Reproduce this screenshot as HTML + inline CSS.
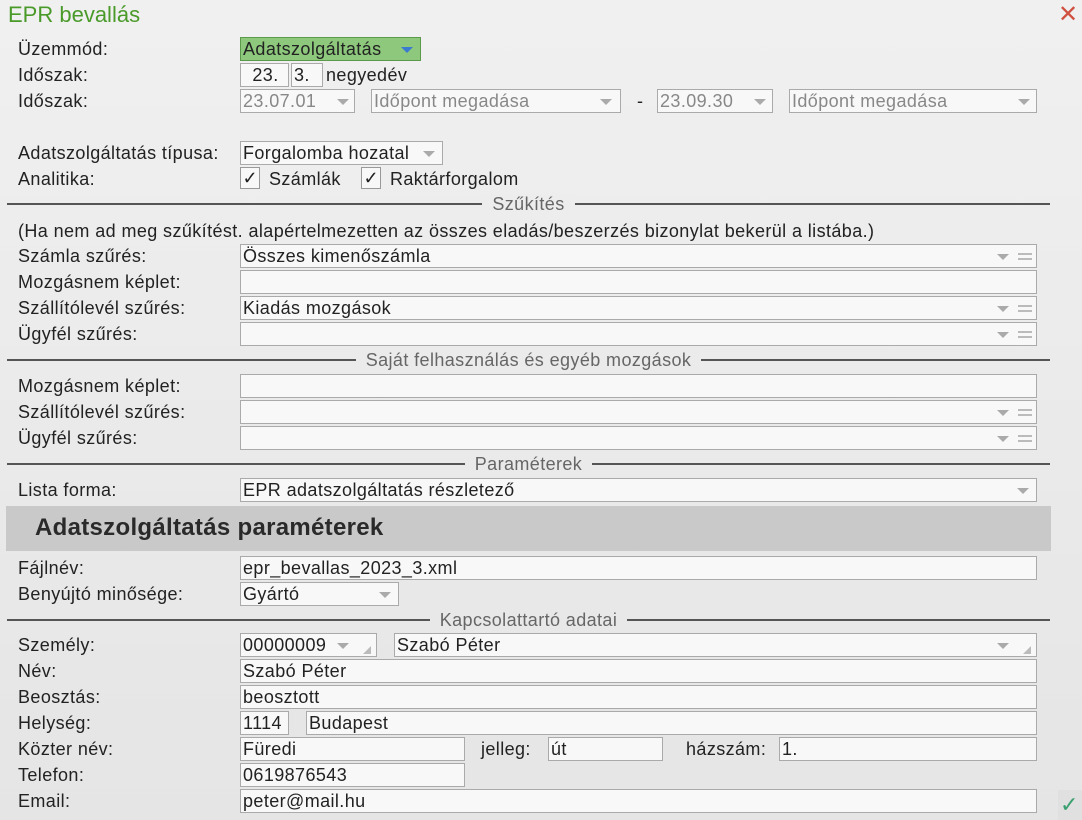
<!DOCTYPE html>
<html><head><meta charset="utf-8"><style>
*{margin:0;padding:0;box-sizing:border-box}
body{width:1082px;height:820px;background:linear-gradient(#f0f0f0,#e5e5e5);font-family:"Liberation Sans",sans-serif;font-size:18px;letter-spacing:0.4px;color:#222;position:relative;overflow:hidden}
.a{position:absolute;white-space:nowrap}
.l{position:absolute;left:18px;line-height:24px;white-space:nowrap}
.f{position:absolute;height:24px;background:#f8f8f8;border:1px solid #aaa;line-height:22px;padding-left:2px;white-space:nowrap;overflow:hidden}
.g{color:#888}
.dd{position:absolute;top:9px;width:0;height:0;border-left:6px solid transparent;border-right:6px solid transparent;border-top:6px solid #aaa}
.eq{position:absolute;top:8px;right:4px;width:14px;height:7px;border-top:2px solid #bbb;border-bottom:2px solid #bbb}
.hr{position:absolute;left:7px;width:1043px;height:2px;background:#555}
.ht{position:absolute;left:0;width:1057px;text-align:center;line-height:20px;color:#666}
.ht span{padding:0 10px}
.cb{position:absolute;width:20px;height:22px;border:1px solid #999;background:#f8f8f8;font-size:18px;line-height:20px;text-align:center;letter-spacing:0}
</style></head><body>
<div class="a" style="left:8px;top:2px;font-size:22px;color:#4a9a2a;letter-spacing:0">EPR bevallás</div>
<div class="a" style="left:1058px;top:0px;font-size:24px;color:#d05040">✕</div>

<div class="l" style="top:37px">Üzemmód:</div>
<div class="f" style="left:240px;top:37px;width:181px;background:#8dc87c;border-color:#5a9a4a">Adatszolgáltatás<div class="dd" style="left:160px;border-top-color:#3a7ad0"></div></div>
<div class="l" style="top:63px">Időszak:</div>
<div class="f" style="left:240px;top:63px;width:49px;text-align:center">23.</div>
<div class="f" style="left:291px;top:63px;width:32px">3.</div>
<div class="a" style="left:326px;top:63px;line-height:24px">negyedév</div>
<div class="l" style="top:89px">Időszak:</div>
<div class="f g" style="left:240px;top:89px;width:115px">23.07.01<div class="dd" style="left:96px"></div></div>
<div class="f g" style="left:371px;top:89px;width:250px">Időpont megadása<div class="dd" style="left:228px"></div></div>
<div class="a" style="left:637px;top:89px;line-height:24px">-</div>
<div class="f g" style="left:657px;top:89px;width:116px">23.09.30<div class="dd" style="left:96px"></div></div>
<div class="f g" style="left:789px;top:89px;width:248px">Időpont megadása<div class="dd" style="left:228px"></div></div>

<div class="l" style="top:141px">Adatszolgáltatás típusa:</div>
<div class="f" style="left:240px;top:141px;width:203px">Forgalomba hozatal<div class="dd" style="left:182px"></div></div>
<div class="l" style="top:167px">Analitika:</div>
<div class="cb" style="left:240px;top:167px">✓</div><div class="a" style="left:269px;top:167px;line-height:24px">Számlák</div>
<div class="cb" style="left:361px;top:167px">✓</div><div class="a" style="left:390px;top:167px;line-height:24px">Raktárforgalom</div>

<div class="hr" style="top:203px"></div><div class="ht" style="top:194px"><span style="background:#ededed">Szűkítés</span></div>
<div class="l" style="top:219px">(Ha nem ad meg szűkítést. alapértelmezetten az összes eladás/beszerzés bizonylat bekerül a listába.)</div>
<div class="l" style="top:244px">Számla szűrés:</div>
<div class="f" style="left:240px;top:244px;width:797px">Összes kimenőszámla<div class="dd" style="left:756px"></div><div class="eq"></div></div>
<div class="l" style="top:270px">Mozgásnem képlet:</div>
<div class="f" style="left:240px;top:270px;width:797px"></div>
<div class="l" style="top:296px">Szállítólevél szűrés:</div>
<div class="f" style="left:240px;top:296px;width:797px">Kiadás mozgások<div class="dd" style="left:756px"></div><div class="eq"></div></div>
<div class="l" style="top:322px">Ügyfél szűrés:</div>
<div class="f" style="left:240px;top:322px;width:797px"><div class="dd" style="left:756px"></div><div class="eq"></div></div>

<div class="hr" style="top:359px"></div><div class="ht" style="top:350px"><span style="background:#ebebeb">Saját felhasználás és egyéb mozgások</span></div>
<div class="l" style="top:374px">Mozgásnem képlet:</div>
<div class="f" style="left:240px;top:374px;width:797px"></div>
<div class="l" style="top:400px">Szállítólevél szűrés:</div>
<div class="f" style="left:240px;top:400px;width:797px"><div class="dd" style="left:756px"></div><div class="eq"></div></div>
<div class="l" style="top:426px">Ügyfél szűrés:</div>
<div class="f" style="left:240px;top:426px;width:797px"><div class="dd" style="left:756px"></div><div class="eq"></div></div>

<div class="hr" style="top:463px"></div><div class="ht" style="top:454px"><span style="background:#eaeaea">Paraméterek</span></div>
<div class="l" style="top:478px">Lista forma:</div>
<div class="f" style="left:240px;top:478px;width:797px">EPR adatszolgáltatás részletező<div class="dd" style="left:776px"></div></div>

<div class="a" style="left:6px;top:506px;width:1045px;height:45px;background:#c9c9c9"></div>
<div class="a" style="left:35px;top:514px;font-size:24px;font-weight:bold;color:#2a2a2a;letter-spacing:0.3px">Adatszolgáltatás paraméterek</div>

<div class="l" style="top:556px">Fájlnév:</div>
<div class="f" style="left:240px;top:556px;width:797px">epr_bevallas_2023_3.xml</div>
<div class="l" style="top:582px">Benyújtó minősége:</div>
<div class="f" style="left:240px;top:582px;width:159px">Gyártó<div class="dd" style="left:138px"></div></div>

<div class="hr" style="top:619px"></div><div class="ht" style="top:610px"><span style="background:#e8e8e8">Kapcsolattartó adatai</span></div>
<div class="l" style="top:633px">Személy:</div>
<div class="f" style="left:240px;top:633px;width:137px">00000009<div class="dd" style="left:96px"></div><div class="a" style="left:122px;top:12px;width:0;height:0;border-left:8px solid transparent;border-bottom:8px solid #bbb"></div></div>
<div class="f" style="left:394px;top:633px;width:643px">Szabó Péter<div class="dd" style="left:602px"></div><div class="a" style="left:628px;top:12px;width:0;height:0;border-left:8px solid transparent;border-bottom:8px solid #bbb"></div></div>
<div class="l" style="top:659px">Név:</div>
<div class="f" style="left:240px;top:659px;width:797px">Szabó Péter</div>
<div class="l" style="top:685px">Beosztás:</div>
<div class="f" style="left:240px;top:685px;width:797px">beosztott</div>
<div class="l" style="top:711px">Helység:</div>
<div class="f" style="left:240px;top:711px;width:49px">1114</div>
<div class="f" style="left:306px;top:711px;width:731px">Budapest</div>
<div class="l" style="top:737px">Közter név:</div>
<div class="f" style="left:240px;top:737px;width:225px">Füredi</div>
<div class="a" style="left:481px;top:737px;line-height:24px">jelleg:</div>
<div class="f" style="left:548px;top:737px;width:115px">út</div>
<div class="a" style="left:686px;top:737px;line-height:24px">házszám:</div>
<div class="f" style="left:779px;top:737px;width:258px">1.</div>
<div class="l" style="top:763px">Telefon:</div>
<div class="f" style="left:240px;top:763px;width:225px">0619876543</div>
<div class="l" style="top:789px">Email:</div>
<div class="f" style="left:240px;top:789px;width:797px">peter@mail.hu</div>
<div class="a" style="left:1058px;top:790px;width:24px;height:30px;background:#e0e0e0"></div>
<div class="a" style="left:1060px;top:792px;font-size:22px;color:#3aa070">✓</div>
</body></html>
